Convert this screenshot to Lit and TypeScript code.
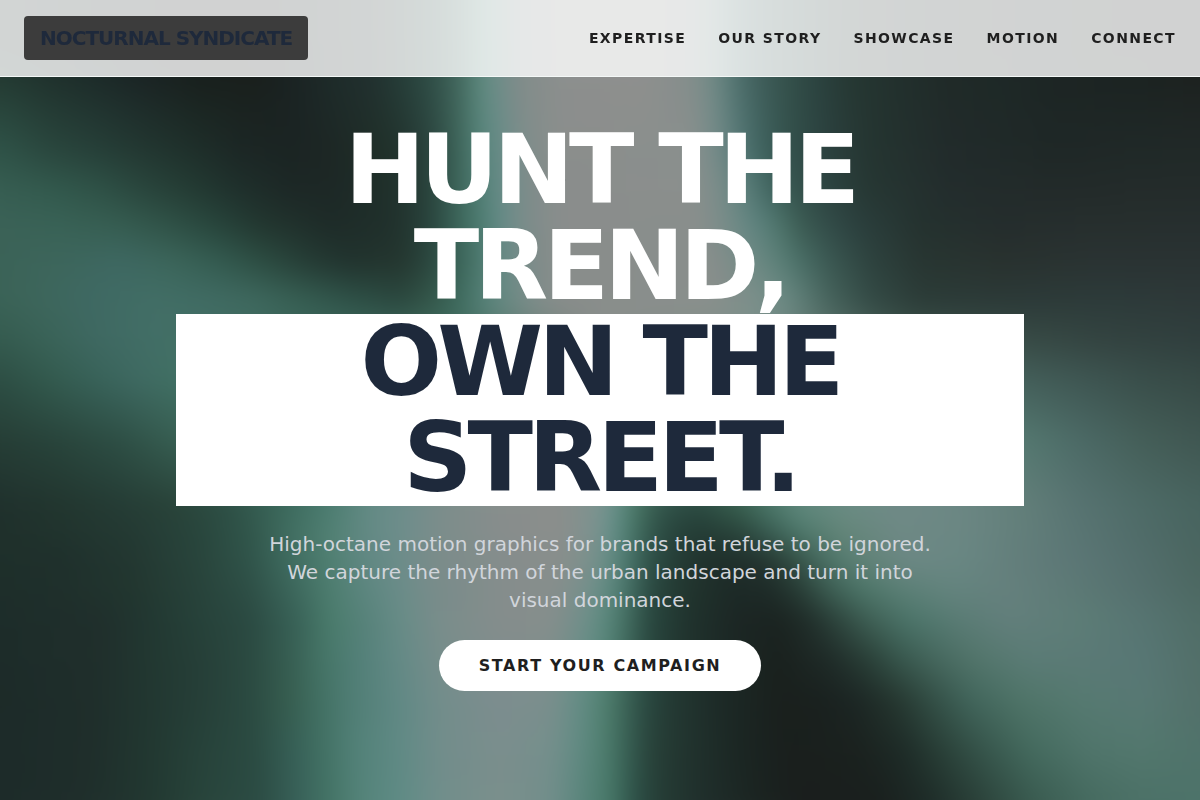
import { LitElement, html, svg, css } from "lit";
import { customElement } from "lit/decorators.js";

/** One horizontal line of the backdrop mesh: y, then "x colour" stops. */
interface MeshRow {
  y: number;
  stops: string;
}

const WIDTH = 1200;
const HEIGHT = 800;

const MESH: MeshRow[] = [
  { y: 40, stops: "0 #1f2f2b,50 #1d2a28,100 #1c2725,160 #1b2222,220 #1a201d,280 #1b2222,340 #1f2d2b,370 #22302f,400 #263d38,430 #2f4d46,460 #44695f,480 #5c8a7e,495 #6c8d89,520 #828c8a,560 #8c8f8e,640 #8f8f8e,690 #858e8c,715 #6f8a86,735 #517370,760 #405e5b,790 #34504a,820 #2b423f,850 #263833,900 #222f2d,950 #1f2a28,1000 #1e2725,1060 #1c2423,1130 #1b2220,1200 #1b1f1e" },
  { y: 77, stops: "0 #243b33,50 #20322d,100 #1d2b29,140 #1b2525,200 #19201d,260 #1a201d,290 #1b2323,340 #1f2d2b,370 #22302f,400 #263d38,430 #2f4d46,460 #44695f,480 #5c8a7e,495 #6c8d89,520 #828c8a,560 #8c8f8e,640 #8f8f8e,690 #858e8c,715 #6f8a86,735 #517370,760 #405e5b,790 #34504a,820 #2b423f,850 #263833,900 #22302d,950 #202a28,1000 #1e2927,1060 #1d2524,1130 #1c2422,1200 #1d2220" },
  { y: 150, stops: "0 #2f5348,50 #2a473e,100 #263f38,140 #233832,190 #1f302b,240 #1c2725,290 #1b2423,330 #1d2725,380 #203029,400 #22332e,430 #2b443e,455 #3a6055,480 #55847a,500 #688c88,525 #7f8d8b,560 #8b8e8c,690 #8a8f8d,715 #768c8a,740 #557876,760 #406460,790 #33504b,830 #2b403e,870 #253531,950 #222b2b,1050 #1f2827,1200 #212928" },
  { y: 190, stops: "0 #375e52,50 #335a4e,100 #2f5247,140 #2a473e,190 #243c34,240 #1f302c,290 #1d2826,330 #1d2826,380 #1f2f2a,400 #22332e,430 #2a443d,455 #3a6156,480 #517f75,500 #668c88,525 #7d8c8a,560 #8a8d8c,690 #8b8f8d,720 #7a8d8a,745 #5c807c,765 #466b66,790 #375650,830 #2d4340,870 #263733,950 #232d2d,1050 #232b2a,1200 #242c2b" },
  { y: 225, stops: "0 #3b6257,60 #396256,120 #365d51,170 #305247,220 #27443b,260 #233730,330 #1e2b28,380 #202f2b,400 #22332e,430 #29443d,455 #3a6257,480 #4c7c70,500 #648b87,525 #7c8c8a,560 #8a8d8c,700 #898e8c,730 #748c88,755 #5f8480,780 #4d746b,800 #3c5c53,830 #324b48,860 #2b3f3d,920 #25322f,1000 #252d2d,1100 #272f2e,1200 #272f2f" },
  { y: 262, stops: "0 #3c6358,60 #3d665c,120 #3e6862,170 #3c665b,220 #345b50,260 #2d4e43,310 #253c35,350 #21332e,400 #24362f,430 #2b473f,460 #3b6559,485 #527f75,505 #6a8b87,530 #7d8c8a,560 #898d8b,710 #898e8c,750 #718b86,780 #5b8078,800 #4a6f67,830 #3b5852,870 #2e433f,920 #283632,1000 #29322f,1100 #2a3333,1200 #2a3333" },
  { y: 300, stops: "0 #3b6357,50 #3e675d,90 #3f6963,150 #426e66,200 #416c64,250 #3f695f,300 #375f53,350 #2f5248,400 #2b483f,430 #345649,460 #3f6c5f,490 #5b867d,530 #7c8d8a,560 #898d8b,710 #8a8f8c,760 #7a8f8a,785 #6c8a84,800 #5f7e77,830 #46635c,870 #344b46,920 #2c3c38,1000 #2c3a38,1100 #2d3b3a,1200 #2e3939" },
  { y: 340, stops: "0 #355b4f,50 #3a6358,100 #3f6962,150 #426e66,176 #437066,300 #3d685d,450 #3f6c5f,600 #8a8f8c,760 #7a8f8a,900 #40584f,1024 #384b46,1100 #344441,1200 #303f3e" },
  { y: 380, stops: "0 #2d4e44,50 #335a4e,100 #39635a,140 #3f6a62,176 #417064,300 #437265,450 #5b867d,600 #8a8f8c,760 #7a8f8a,900 #506d67,1024 #445f5a,1080 #3f5753,1140 #3a4f4b,1200 #374a46" },
  { y: 440, stops: "0 #263e36,60 #29453c,120 #2e4f45,176 #375e52,300 #437265,400 #5b867d,500 #848d8b,600 #868f8c,680 #5b867d,800 #638479,900 #678780,1024 #547870,1080 #4c6a66,1140 #455f59,1200 #405752" },
  { y: 505, stops: "0 #20312d,60 #22362f,120 #253c35,175 #294339,230 #2e5046,290 #3d6b5e,330 #4c7d71,370 #648b85,400 #6d8d8b,440 #7c8e8b,500 #888e8d,560 #8b8e8c,600 #7c9490,615 #65908a,630 #50806f,650 #3a6153,670 #2f5047,700 #2b4a41,740 #38604f,770 #4b7769,800 #5f887c,850 #6b8c84,900 #708a87,960 #6c8784,1020 #637f7a,1080 #577371,1140 #4e6b67,1200 #48645f" },
  { y: 532, stops: "0 #1f302b,60 #21342e,130 #243a33,200 #29463d,250 #31564b,290 #416e61,330 #518073,370 #648a85,400 #6d8d8b,440 #7c8d8b,500 #878d8c,560 #8b8e8c,595 #7c928f,612 #65908a,630 #4b796b,650 #34584e,670 #29463e,700 #243c35,740 #2a453c,770 #395d52,800 #4d786b,840 #638578,900 #6e8985,960 #6b8783,1020 #637f7b,1080 #597573,1140 #506c69,1200 #496560" },
  { y: 560, stops: "0 #1f302b,60 #1f302c,130 #233731,200 #29453c,250 #30544a,290 #3f6c60,330 #508072,365 #618883,400 #6c8d8a,430 #7a8c8a,500 #858d8c,560 #898e8c,590 #7b918d,610 #648d85,630 #487369,650 #2e5047,680 #243a34,720 #1f2e2a,760 #23332f,790 #30493f,810 #3f6156,840 #547b70,870 #638479,910 #6d8885,960 #698783,1010 #647f7c,1080 #5b7675,1140 #536e6c,1200 #4b6660" },
  { y: 590, stops: "0 #1e2e2a,60 #1f302c,130 #22362f,200 #28433b,250 #2e4f46,290 #3b655a,330 #4d7d6f,365 #5c867f,400 #6a8c89,430 #778c8a,500 #858d8c,555 #878e8c,588 #75908c,608 #5f8b82,628 #467166,650 #2b4a42,685 #22362f,730 #1d2a27,770 #1e2b28,800 #283d36,830 #3c5d52,860 #4b7467,900 #5a7f75,950 #64847e,1010 #65807d,1080 #5c7975,1140 #55706e,1200 #4d6963" },
  { y: 620, stops: "0 #1e2d2a,100 #202f2c,150 #223832,200 #27423a,250 #2b4a42,300 #3a6459,330 #4a7c6c,365 #57827a,400 #678c87,440 #7a8d8b,500 #858d8c,550 #868e8c,585 #6f8f8a,605 #5b8a7e,625 #457063,650 #29473f,690 #20322d,740 #1c2624,780 #1b2421,810 #212f2b,840 #2f473f,870 #3f6055,910 #4c756a,960 #5a7c75,1010 #637f7c,1080 #5d7d77,1140 #577572,1200 #506d67" },
  { y: 660, stops: "0 #1d2c29,100 #202f2c,150 #223831,200 #263f38,250 #2b4a41,290 #375e52,325 #467668,360 #538079,400 #648a86,440 #778d8b,500 #818d8e,550 #808e8c,582 #698e88,605 #56867a,625 #416a5e,648 #294840,680 #22352f,730 #1c2825,780 #1a211e,830 #1f2b28,870 #2a4038,900 #37564c,940 #47695f,980 #53766c,1030 #5b7c76,1080 #5b7a76,1140 #587775,1200 #526f69" },
  { y: 700, stops: "0 #1d2b29,90 #1f2e2b,150 #223731,200 #263f38,250 #2b4a41,290 #375e50,320 #427063,350 #4f7d74,400 #618985,440 #738d8b,500 #7d8d8f,550 #7b8f8d,580 #648d86,605 #50806f,625 #3d6558,645 #2b4a42,670 #243a34,720 #1d2a27,780 #1a201d,820 #1a211f,855 #1c2624,895 #25362f,930 #324d44,970 #41655b,1020 #4f7468,1080 #567a71,1140 #587974,1200 #53706a" },
  { y: 750, stops: "0 #1d2b29,90 #1f2e2b,150 #223831,200 #27423a,255 #2b4b42,295 #376057,325 #437265,355 #528178,400 #608a85,440 #728d8b,500 #7b8e8d,550 #758f8c,580 #608a82,607 #4c7c6c,630 #355b50,652 #284139,685 #22342f,740 #1b2623,790 #1a1f1d,860 #1b221f,905 #1e2c28,940 #293f37,985 #37564c,1030 #446a5e,1090 #50756b,1140 #53786e,1200 #50736b" },
  { y: 800, stops: "0 #1d2b29,80 #1f2e2b,150 #223831,200 #28443b,260 #2c4c44,300 #39625a,330 #447466,360 #548379,400 #5f8b85,440 #718e8b,500 #7b8f8c,550 #728e8b,580 #5b867d,610 #477868,635 #2d5047,660 #253c35,700 #202f2c,760 #1b2421,800 #1a1e1d,880 #1a201e,930 #1e2c28,980 #2b423a,1030 #395a4f,1090 #466b60,1140 #4c7167,1200 #4d736a" },
];

@customElement("hero-backdrop")
export class HeroBackdrop extends LitElement {
  static styles = css`
    :host {
      display: block;
      overflow: hidden;
      background: #1d2a27;
    }
    .mesh {
      display: block;
      width: 100%;
      height: 100%;
    }
  `;

  /* Each row is a horizontal gradient that fades in over the row above it. */
  private row(row: MeshRow, index: number) {
    const top = index === 0 ? -40 : MESH[index - 1].y;
    return svg`
      <linearGradient id="row-${index}" gradientUnits="userSpaceOnUse" x1="0" y1="0" x2=${WIDTH} y2="0">
        ${row.stops.split(",").map((entry) => {
          const [x, color] = entry.split(" ");
          return svg`<stop offset=${Number(x) / WIDTH} stop-color=${color}></stop>`;
        })}
      </linearGradient>
      <linearGradient id="fade-${index}" gradientUnits="userSpaceOnUse" x1="0" y1=${top} x2="0" y2=${row.y}>
        <stop offset="0" stop-color="#fff" stop-opacity=${index === 0 ? 1 : 0}></stop>
        <stop offset="1" stop-color="#fff" stop-opacity="1"></stop>
      </linearGradient>
      <mask id="mask-${index}" maskUnits="userSpaceOnUse" x="-40" y=${top} width=${WIDTH + 80} height=${HEIGHT + 40 - top}
        style="mask-type: alpha">
        <rect x="-40" y=${top} width=${WIDTH + 80} height=${HEIGHT + 40 - top} fill="url(#fade-${index})"></rect>
      </mask>
      <rect x="-40" y=${top} width=${WIDTH + 80} height=${HEIGHT + 40 - top}
        fill="url(#row-${index})" mask="url(#mask-${index})"></rect>
    `;
  }

  render() {
    return html`
      <svg class="mesh" viewBox="0 0 1200 800" preserveAspectRatio="none" aria-hidden="true">
        <filter id="soften" filterUnits="userSpaceOnUse" x="-40" y="-40" width="1280" height="880"
          color-interpolation-filters="sRGB">
          <feGaussianBlur stdDeviation="10"></feGaussianBlur>
        </filter>
        <g filter="url(#soften)">${MESH.map((row, index) => this.row(row, index))}</g>
      </svg>
    `;
  }
}

@customElement("app-root")
export class AppRoot extends LitElement {
  static styles = css`
    :host {
      display: block;
      font-family: "DejaVu Sans", sans-serif;
      color: #1f1f1f;
    }
    *,
    *::before {
      box-sizing: border-box;
    }
    .header {
      position: fixed;
      top: 0;
      left: 0;
      right: 0;
      z-index: 2;
      display: flex;
      align-items: center;
      justify-content: space-between;
      padding: 16px 24px;
      background: rgba(255, 255, 255, 0.8);
      border-bottom: 1px solid #f4f8f7;
    }
    .logo {
      padding: 8px 16px;
      border-radius: 4px;
      background: #3c3c3c;
      color: #1e293b;
      font-size: 20px;
      line-height: 28px;
      font-weight: 700;
      letter-spacing: -1px;
      text-decoration: none;
      white-space: nowrap;
    }
    .nav {
      display: flex;
      gap: 32px;
    }
    .link {
      color: #1f1f1f;
      font-size: 14px;
      line-height: 20px;
      font-weight: 700;
      letter-spacing: 0.1em;
      text-decoration: none;
      white-space: nowrap;
    }
    .hero {
      position: relative;
      display: flex;
      align-items: center;
      justify-content: center;
      min-height: 100vh;
      padding: 77px 24px 64px;
    }
    .backdrop {
      position: absolute;
      inset: 0;
    }
    .content {
      position: relative;
      display: flex;
      flex-direction: column;
      align-items: center;
      width: 100%;
      max-width: 848px;
      text-align: center;
    }
    .title {
      width: 100%;
      margin: 0 0 24px;
      color: #fff;
      font-size: 96px;
      line-height: 96px;
      font-weight: 700;
      letter-spacing: -0.05em;
    }
    .mark {
      display: block;
      background: #fff;
      color: #1e293b;
    }
    .lead {
      max-width: 672px;
      margin: 0 0 26px;
      color: #d1d5db;
      font-size: 20px;
      line-height: 28px;
    }
    .cta {
      padding: 16px 40px;
      border: 0;
      border-radius: 26px;
      background: #fff;
      color: #1f1f1f;
      font-family: inherit;
      font-size: 16px;
      line-height: 19px;
      font-weight: 700;
      letter-spacing: 0.1em;
      cursor: pointer;
    }
  `;

  private links = ["Expertise", "Our Story", "Showcase", "Motion", "Connect"];

  render() {
    return html`
      <header class="header">
        <a class="logo" href="#">NOCTURNAL SYNDICATE</a>
        <nav class="nav" aria-label="Main">
          ${this.links.map(
            (label) => html`<a class="link" href="#${label.toLowerCase().replace(" ", "-")}">${label.toUpperCase()}</a>`
          )}
        </nav>
      </header>
      <main class="hero">
        <hero-backdrop class="backdrop"></hero-backdrop>
        <div class="content">
          <h1 class="title">HUNT THE TREND, <span class="mark">OWN THE STREET.</span></h1>
          <p class="lead">
            High-octane motion graphics for brands that refuse to be ignored. We capture the rhythm of the urban
            landscape and turn it into visual dominance.
          </p>
          <button class="cta" type="button">START YOUR CAMPAIGN</button>
        </div>
      </main>
    `;
  }
}
